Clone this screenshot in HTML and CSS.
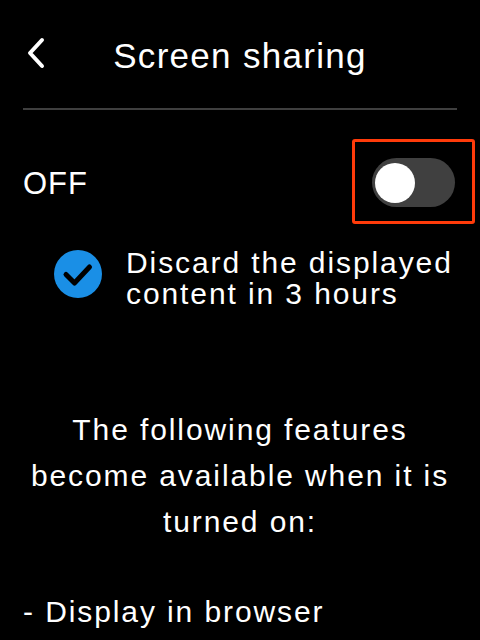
FILE: index.html
```html
<!DOCTYPE html>
<html lang="en">
  <head>
    <meta charset="UTF-8" />
    <meta name="viewport" content="width=device-width, initial-scale=1.0" />
    <title>Screen sharing</title>
    <link rel="stylesheet" href="styles.css">
  </head>
  <body>
    <div class="screen">
      <div class="header">
        <button class="back-btn" type="button" aria-label="Back">
          <svg width="20" height="32" viewBox="0 0 20 32">
            <path d="M16 3 L4 16 L16 29" fill="none" stroke="#fff" stroke-width="4" stroke-linecap="round" stroke-linejoin="round" />
          </svg>
        </button>
        <h1 class="title">Screen sharing</h1>
        <span class="header-spacer"></span>
      </div>

      <div class="toggle-row">
        <span class="toggle-label">OFF</span>
        <div class="highlight">
          <div class="switch">
            <span class="knob"></span>
          </div>
        </div>
      </div>

      <div class="check-row">
        <span class="check-icon">
          <svg width="48" height="48" viewBox="0 0 48 48">
            <circle cx="24" cy="24" r="24" fill="#1a8fe6" />
            <path d="M12 24.5 L20.5 33 L35.5 17" fill="none" stroke="#000" stroke-width="5" stroke-linecap="round" stroke-linejoin="round" />
          </svg>
        </span>
        <span class="check-text">Discard the displayed content in 3 hours</span>
      </div>

      <p class="info">The following features become available when it is turned on:</p>

      <p class="feature">- Display in browser</p>
    </div>
  </body>
</html>
```

FILE: styles.css
```css
* {
  box-sizing: border-box;
}
body {
  margin: 0;
  background-color: #000;
  color: #fff;
  font-family: "Liberation Sans", Arial, sans-serif;
  overflow: hidden;
}
.screen {
  width: 480px;
  height: 640px;
}
.header {
  height: 110px;
  margin: 0 23px;
  padding-bottom: 2px;
  display: flex;
  align-items: center;
  border-bottom: 2px solid #3f3f3f;
}
.back-btn {
  width: 60px;
  height: 40px;
  padding: 0 0 0 3px;
  border: none;
  background: none;
  display: flex;
  align-items: center;
  cursor: pointer;
}
.header-spacer {
  width: 60px;
}
.title {
  flex: 1;
  margin: 0;
  text-align: center;
  font-size: 35px;
  font-weight: normal;
  letter-spacing: 1.3px;
  padding-top: 6px;
}
.toggle-row {
  display: flex;
  align-items: center;
  justify-content: space-between;
  margin: 29px 5px 0 23px;
}
.toggle-label {
  font-size: 31px;
  letter-spacing: 1px;
  padding-top: 5px;
}
.highlight {
  border: 3px solid #ff3b0a;
  border-radius: 3px;
  padding: 16px 17px 14px 17px;
}
.switch {
  width: 83px;
  height: 49px;
  border-radius: 25px;
  background-color: #404040;
  padding: 5px 0 0 3px;
}
.knob {
  display: block;
  width: 40px;
  height: 40px;
  border-radius: 50%;
  background-color: #fff;
}
.check-row {
  display: flex;
  align-items: center;
  gap: 24px;
  margin: 17px 20px 0 54px;
}
.check-icon {
  flex-shrink: 0;
  display: flex;
  margin-bottom: 3px;
}
.check-text {
  font-size: 30px;
  line-height: 31px;
  letter-spacing: 1.9px;
  padding-top: 6px;
}
.info {
  margin: 98px 24px 0 24px;
  text-align: center;
  font-size: 30px;
  line-height: 46px;
  letter-spacing: 1.9px;
}
.feature {
  margin: 44px 0 0 23px;
  font-size: 30px;
  line-height: 46px;
  letter-spacing: 1.9px;
}
```
